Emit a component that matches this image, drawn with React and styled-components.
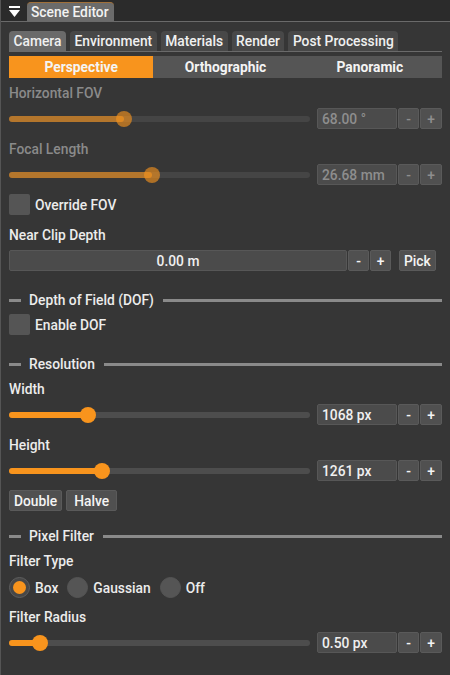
import React from 'react';
import styled, { createGlobalStyle } from 'styled-components';

const ORANGE = '#f8941d';

const Global = createGlobalStyle`
  html, body { margin: 0; padding: 0; background: #363636; }
  body {
    font-family: Roboto, "Noto Sans", "Liberation Sans", sans-serif;
    font-size: 13.8px;
    font-weight: 500;
    color: #ececec;
  }
  * { box-sizing: border-box; }
`;

const Window = styled.div`
  width: 450px;
  height: 675px;
  background: #363636;
  border-left: 1px solid #555;
  display: flex;
  flex-direction: column;
  overflow: hidden;
`;

const TitleBar = styled.div`
  height: 22px;
  flex: 0 0 22px;
  background: #2b2b2b;
  border-bottom: 1px solid #6a6a6a;
  display: flex;
  align-items: flex-end;
  padding-left: 8px;
  gap: 7px;
`;

const CollapseIcon = styled.svg`
  width: 11px;
  height: 11px;
  align-self: center;
  margin-top: 1px;
`;

const TitleTab = styled.div`
  height: 19px;
  padding: 0 5px 0 4px;
  background: #6b6b6b;
  border-top: 1px solid #a0703a;
  border-radius: 4px 4px 0 0;
  line-height: 18px;
  color: #f2f2f2;
`;

const Content = styled.div`
  display: flex;
  flex-direction: column;
  padding: 9px 8px 0 8px;
`;

const TabBar = styled.div`
  display: flex;
  gap: 4px;
  border-bottom: 1px solid #6a6a6a;
`;

const Tab = styled.div`
  height: 20px;
  line-height: 20px;
  padding: 0 4.5px;
  border-radius: 4px 4px 0 0;
  background: ${p => (p.$active ? '#6a6a6a' : '#484848')};
  color: #f0f0f0;
  white-space: nowrap;
`;

const Segmented = styled.div`
  margin-top: ${p => p.$mt || 0}px;
  display: grid;
  grid-template-columns: 1fr 1fr 1fr;
  height: 22px;
`;

const Segment = styled.div`
  display: flex;
  align-items: center;
  justify-content: center;
  font-weight: 700;
  background: ${p => (p.$active ? ORANGE : '#555555')};
  color: #f4f4f4;
`;

const FieldBox = styled.div`
  margin-top: ${p => p.$mt || 0}px;
  display: flex;
  flex-direction: column;
  gap: 5px;
`;

const Label = styled.div`
  height: 20px;
  line-height: 20px;
  margin-top: ${p => p.$mt || 0}px;
  color: ${p => (p.$disabled ? '#8a8a8a' : '#ececec')};
`;

const Row = styled.div`
  display: flex;
  align-items: center;
  height: 21px;
  margin-top: ${p => p.$mt || 0}px;
`;

const SliderTrack = styled.div`
  position: relative;
  flex: 0 0 301px;
  height: 6px;
  margin-right: 7px;
  border-radius: 3px;
  background: ${p => (p.$disabled ? '#454545' : '#4d4d4d')};
`;

const SliderFill = styled.div`
  position: absolute;
  left: 0;
  top: 0;
  bottom: 0;
  border-radius: 3px;
  background: ${p => (p.$disabled ? 'rgba(248,148,29,0.62)' : ORANGE)};
`;

const SliderKnob = styled.div`
  position: absolute;
  top: 50%;
  width: 16px;
  height: 16px;
  margin: -8px 0 0 -8px;
  border-radius: 50%;
  background: ${p => (p.$disabled ? 'rgba(248,148,29,0.62)' : ORANGE)};
`;

const Input = styled.div`
  width: ${p => p.$w}px;
  height: 21px;
  flex: 0 0 ${p => p.$w}px;
  background: #4b4b4b;
  border: 1px solid #575757;
  border-radius: 2px;
  display: flex;
  align-items: center;
  justify-content: ${p => (p.$center ? 'center' : 'flex-start')};
  padding: 0 4px;
  color: ${p => (p.$disabled ? '#8e8e8e' : '#f0f0f0')};
  margin-right: 1px;
  white-space: nowrap;
`;

const Button = styled.div`
  height: 21px;
  min-width: ${p => p.$w || 21}px;
  padding: 0 4px;
  margin-left: ${p => p.$ml || 0}px;
  background: #505050;
  border: 1px solid #5a5a5a;
  border-radius: 2px;
  display: flex;
  align-items: center;
  justify-content: center;
  color: ${p => (p.$disabled ? '#8e8e8e' : '#f4f4f4')};
`;

const Checkbox = styled.div`
  width: 21px;
  height: 21px;
  border-radius: 2px;
  background: #555555;
  margin-right: 5px;
`;

const SepRow = styled.div`
  height: 20px;
  margin-top: ${p => p.$mt || 0}px;
  display: flex;
  align-items: center;
`;

const SepDash = styled.div`
  flex: 0 0 12px;
  height: 3px;
  background: #8a8a8a;
`;

const SepLine = styled.div`
  flex: 1;
  height: 3px;
  background: #8a8a8a;
`;

const SepText = styled.div`
  padding: 0 9px 0 8px;
  color: #ececec;
  white-space: nowrap;
`;

const ButtonRow = styled.div`
  display: flex;
  gap: 4px;
  margin-top: ${p => p.$mt || 0}px;
`;

const RadioGroup = styled.div`
  display: flex;
  align-items: center;
  gap: 9px;
  height: 21px;
  margin-top: ${p => p.$mt || 0}px;
`;

const RadioItem = styled.div`
  display: flex;
  align-items: center;
  gap: 5px;
`;

const RadioCircle = styled.div`
  width: 21px;
  height: 21px;
  border-radius: 50%;
  background: ${p => (p.$on ? '#474747' : '#555555')};
  border: 1px solid ${p => (p.$on ? '#5e5e5e' : '#555555')};
  display: flex;
  align-items: center;
  justify-content: center;
  &::after {
    content: '';
    display: ${p => (p.$on ? 'block' : 'none')};
    width: 13px;
    height: 13px;
    border-radius: 50%;
    background: ${ORANGE};
  }
`;

function Slider({ pct, disabled }) {
  return (
    <SliderTrack $disabled={disabled}>
      <SliderFill $disabled={disabled} style={{ width: `${pct}%` }} />
      <SliderKnob $disabled={disabled} style={{ left: `${pct}%` }} />
    </SliderTrack>
  );
}

function SliderField({ label, value, pct, disabled, mt }) {
  return (
    <FieldBox $mt={mt}>
      <Label $disabled={disabled}>{label}</Label>
      <Row>
        <Slider pct={pct} disabled={disabled} />
        <Input $w={80} $disabled={disabled}>{value}</Input>
        <Button $disabled={disabled}>-</Button>
        <Button $disabled={disabled} $ml={1} $w={22}>+</Button>
      </Row>
    </FieldBox>
  );
}

function Separator({ title, mt }) {
  return (
    <SepRow $mt={mt}>
      <SepDash />
      <SepText>{title}</SepText>
      <SepLine />
    </SepRow>
  );
}

function CheckRow({ label, mt }) {
  return (
    <Row $mt={mt}>
      <Checkbox />
      <span>{label}</span>
    </Row>
  );
}

export default function App() {
  return (
    <>
      <Global />
      <Window>
        <TitleBar>
          <CollapseIcon viewBox="0 0 11 11">
            <rect x="0" y="0" width="11" height="2" fill="#fff" />
            <polygon points="0,4 11,4 5.5,11" fill="#fff" />
          </CollapseIcon>
          <TitleTab>Scene Editor</TitleTab>
        </TitleBar>
        <Content>
          <TabBar>
            <Tab $active>Camera</Tab>
            <Tab>Environment</Tab>
            <Tab>Materials</Tab>
            <Tab>Render</Tab>
            <Tab>Post Processing</Tab>
          </TabBar>
          <Segmented $mt={4}>
            <Segment $active>Perspective</Segment>
            <Segment>Orthographic</Segment>
            <Segment>Panoramic</Segment>
          </Segmented>

          <SliderField mt={5} label="Horizontal FOV" value="68.00 °" pct={38.2} disabled />
          <SliderField mt={10} label="Focal Length" value="26.68 mm" pct={47.5} disabled />
          <CheckRow mt={9} label="Override FOV" />

          <FieldBox $mt={10}>
            <Label>Near Clip Depth</Label>
            <Row>
              <Input $w={338} $center>0.00 m</Input>
              <Button>-</Button>
              <Button $ml={1}>+</Button>
              <Button $ml={8}>Pick</Button>
            </Row>
          </FieldBox>

          <Separator mt={19} title="Depth of Field (DOF)" />
          <CheckRow mt={4} label="Enable DOF" />

          <Separator mt={19} title="Resolution" />
          <SliderField mt={5} label="Width" value="1068 px" pct={26.4} />
          <SliderField mt={10} label="Height" value="1261 px" pct={30.9} />
          <ButtonRow $mt={9}>
            <Button $w={51}>Double</Button>
            <Button $w={51}>Halve</Button>
          </ButtonRow>

          <Separator mt={15} title="Pixel Filter" />
          <Label $mt={5}>Filter Type</Label>
          <RadioGroup $mt={6}>
            <RadioItem><RadioCircle $on /><span>Box</span></RadioItem>
            <RadioItem><RadioCircle /><span>Gaussian</span></RadioItem>
            <RadioItem><RadioCircle /><span>Off</span></RadioItem>
          </RadioGroup>
          <SliderField mt={9} label="Filter Radius" value="0.50 px" pct={10.3} />
        </Content>
      </Window>
    </>
  );
}
